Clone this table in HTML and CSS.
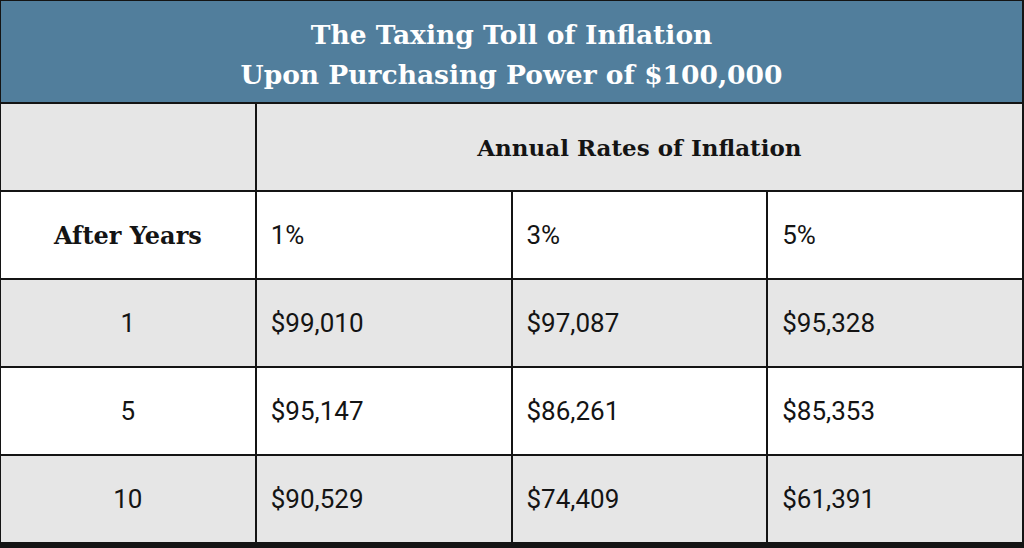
FILE: index.html
```html
<!DOCTYPE html>
<html lang="en">
<head>
<meta charset="utf-8">
<title>The Taxing Toll of Inflation</title>
<link rel="stylesheet" href="styles.css">
</head>
<body>
<div class="table">
  <div class="title">The Taxing Toll of Inflation<br>Upon Purchasing Power of $100,000</div>
  <div class="cell gray"></div>
  <div class="cell gray span3 head">Annual Rates of Inflation</div>
  <div class="cell center head head-lg">After Years</div>
  <div class="cell">1%</div>
  <div class="cell">3%</div>
  <div class="cell">5%</div>
  <div class="cell gray center">1</div>
  <div class="cell gray">$99,010</div>
  <div class="cell gray">$97,087</div>
  <div class="cell gray">$95,328</div>
  <div class="cell center">5</div>
  <div class="cell">$95,147</div>
  <div class="cell">$86,261</div>
  <div class="cell">$85,353</div>
  <div class="cell gray center">10</div>
  <div class="cell gray">$90,529</div>
  <div class="cell gray">$74,409</div>
  <div class="cell gray">$61,391</div>
</div>
</body>
</html>
```
FILE: styles.css
```css
html, body {
  margin: 0;
  padding: 0;
  background: #ffffff;
}
.table {
  width: 1024px;
  height: 548px;
  box-sizing: border-box;
  display: grid;
  grid-template-columns: repeat(4, 1fr);
  grid-template-rows: 101px repeat(5, 86px);
  gap: 2px;
  padding: 1px 2px 4px 1px;
  background: #141414;
  font-family: Roboto, "Liberation Sans", sans-serif;
  color: #141414;
}
.title {
  grid-column: 1 / 5;
  background: #517e9c;
  color: #ffffff;
  font-family: "DejaVu Serif", serif;
  font-weight: bold;
  font-size: 26.5px;
  line-height: 40px;
  text-align: center;
  display: flex;
  align-items: center;
  justify-content: center;
  padding-top: 6px;
  box-sizing: border-box;
}
.cell {
  background: #ffffff;
  display: flex;
  align-items: center;
  padding-left: 14px;
  font-size: 26px;
}
.gray {
  background: #e6e6e6;
}
.center {
  justify-content: center;
  padding-left: 0;
}
.span3 {
  grid-column: 2 / 5;
  justify-content: center;
  padding-left: 0;
}
.head {
  font-family: "DejaVu Serif", serif;
  font-weight: bold;
  font-size: 23px;
}
.head-lg {
  font-size: 24px;
}
```
